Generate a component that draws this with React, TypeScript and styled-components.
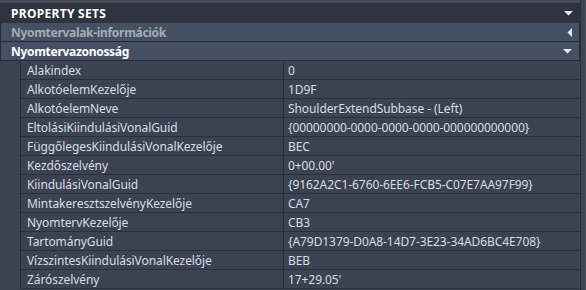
import React from 'react';
import styled, { createGlobalStyle } from 'styled-components';

const GlobalStyle = createGlobalStyle`
    html, body {
        margin: 0;
        padding: 0;
        background: #3b4252;
    }
`;

const StyledPanel = styled.div`
    width: 586px;
    height: 290px;
    display: flex;
    background: #3b4353;
    overflow: hidden;
    font-family: "Noto Sans", "Open Sans", sans-serif;
    font-size: 12px;
`;

const StyledMain = styled.div`
    flex: 1;
    display: flex;
    flex-direction: column;
    min-width: 0;
`;

const StyledScrollTrack = styled.div`
    width: 4px;
    border-left: 1px solid #2a2f39;
    background: #3d4454;
    border-right: 1px solid #4a5262;
`;

const StyledTopStrip = styled.div`
    height: 3px;
    background: #464c59;
    border-bottom: 1px solid #2b2f38;
`;

const StyledSectionHeader = styled.div`
    height: 19px;
    display: flex;
    align-items: center;
    justify-content: space-between;
    padding: 0 7px 0 11px;
    background: #2e333f;
    color: #ffffff;
    font-weight: 700;
    letter-spacing: 0.3px;
`;

const StyledGroupRow = styled.div<{ $dim?: boolean }>`
    height: 18px;
    display: flex;
    align-items: center;
    justify-content: space-between;
    padding: 0 7px 0 10px;
    background: #465064;
    border: 1px solid #262b35;
    border-top: none;
    color: ${props => (props.$dim ? '#a6abb5' : '#ffffff')};
    font-weight: 700;
    letter-spacing: -0.3px;
`;

const StyledTable = styled.div`
    display: grid;
    grid-template-columns: 263px 1fr;
    margin-left: 20px;
`;

const StyledCell = styled.div<{ $value?: boolean }>`
    height: 18px;
    display: flex;
    align-items: center;
    padding-left: ${props => (props.$value ? '4px' : '6px')};
    border-left: 1px solid #2a2f3a;
    border-bottom: 1px solid #2a2f3a;
    color: #d9dce2;
    white-space: nowrap;
    letter-spacing: -0.08px;
`;

const DownArrow = () => (
    <svg width="9" height="5" viewBox="0 0 9 5">
        <polygon points="0,0 9,0 4.5,4.5" fill="#e6e8ec" />
    </svg>
);

const LeftArrow = () => (
    <svg width="5" height="9" viewBox="0 0 5 9">
        <polygon points="5,0 5,9 0.5,4.5" fill="#e6e8ec" />
    </svg>
);

const properties: [string, string][] = [
    ['Alakindex', '0'],
    ['AlkotóelemKezelője', '1D9F'],
    ['AlkotóelemNeve', 'ShoulderExtendSubbase - (Left)'],
    ['EltolásiKiindulásiVonalGuid', '{00000000-0000-0000-0000-000000000000}'],
    ['FüggőlegesKiindulásiVonalKezelője', 'BEC'],
    ['Kezdőszelvény', "0+00.00'"],
    ['KiindulásiVonalGuid', '{9162A2C1-6760-6EE6-FCB5-C07E7AA97F99}'],
    ['MintakeresztszelvényKezelője', 'CA7'],
    ['NyomtervKezelője', 'CB3'],
    ['TartományGuid', '{A79D1379-D0A8-14D7-3E23-34AD6BC4E708}'],
    ['VízszintesKiindulásiVonalKezelője', 'BEB'],
    ['Zárószelvény', "17+29.05'"],
];

export default function App() {
    return (
        <>
            <GlobalStyle />
            <StyledPanel>
                <StyledMain>
                    <StyledTopStrip />
                    <StyledSectionHeader>
                        <span>PROPERTY SETS</span>
                        <DownArrow />
                    </StyledSectionHeader>
                    <StyledGroupRow $dim>
                        <span>Nyomtervalak-információk</span>
                        <LeftArrow />
                    </StyledGroupRow>
                    <StyledGroupRow>
                        <span>Nyomtervazonosság</span>
                        <DownArrow />
                    </StyledGroupRow>
                    <StyledTable>
                        {properties.map(([name, value]) => (
                            <React.Fragment key={name}>
                                <StyledCell>{name}</StyledCell>
                                <StyledCell $value>{value}</StyledCell>
                            </React.Fragment>
                        ))}
                    </StyledTable>
                </StyledMain>
                <StyledScrollTrack />
            </StyledPanel>
        </>
    );
}
